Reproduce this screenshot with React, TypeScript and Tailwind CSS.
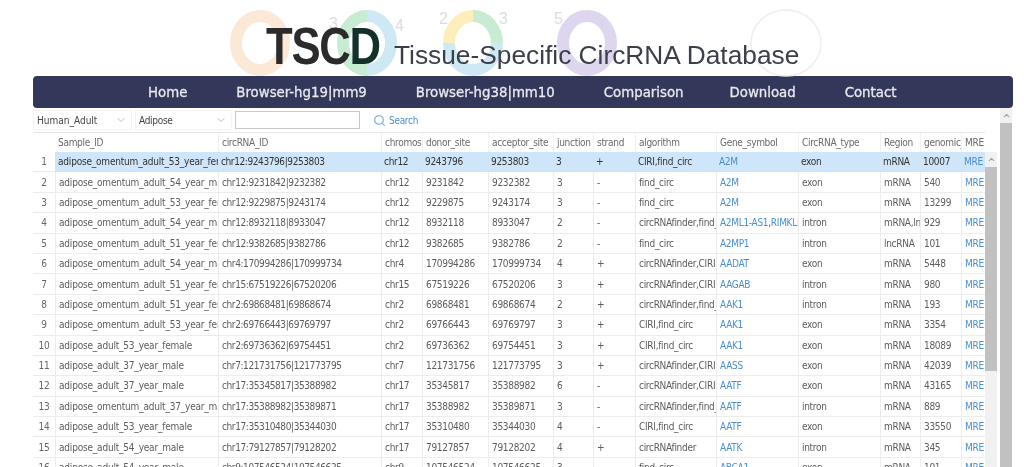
import React from "react";
import { Search, ChevronDown, ChevronUp } from "lucide-react";

const om = "adipose_omentum_adult_";
const rows: string[][] = [
  [om + "53_year_female", "chr12:9243796|9253803", "chr12", "9243796", "9253803", "3", "+", "CIRI,find_circ", "A2M", "exon", "mRNA", "10007"],
  [om + "54_year_male", "chr12:9231842|9232382", "chr12", "9231842", "9232382", "3", "-", "find_circ", "A2M", "exon", "mRNA", "540"],
  [om + "53_year_female", "chr12:9229875|9243174", "chr12", "9229875", "9243174", "3", "-", "find_circ", "A2M", "exon", "mRNA", "13299"],
  [om + "54_year_male", "chr12:8932118|8933047", "chr12", "8932118", "8933047", "2", "-", "circRNAfinder,find_circ", "A2ML1-AS1,RIMKLB", "intron", "mRNA,lncRNA", "929"],
  [om + "51_year_female", "chr12:9382685|9382786", "chr12", "9382685", "9382786", "2", "-", "find_circ", "A2MP1", "intron", "lncRNA", "101"],
  [om + "54_year_male", "chr4:170994286|170999734", "chr4", "170994286", "170999734", "4", "+", "circRNAfinder,CIRI", "AADAT", "exon", "mRNA", "5448"],
  [om + "51_year_female", "chr15:67519226|67520206", "chr15", "67519226", "67520206", "3", "+", "circRNAfinder,CIRI", "AAGAB", "intron", "mRNA", "980"],
  [om + "51_year_female", "chr2:69868481|69868674", "chr2", "69868481", "69868674", "2", "+", "circRNAfinder,find_circ", "AAK1", "intron", "mRNA", "193"],
  [om + "53_year_female", "chr2:69766443|69769797", "chr2", "69766443", "69769797", "3", "+", "CIRI,find_circ", "AAK1", "exon", "mRNA", "3354"],
  ["adipose_adult_53_year_female", "chr2:69736362|69754451", "chr2", "69736362", "69754451", "3", "+", "CIRI,find_circ", "AAK1", "exon", "mRNA", "18089"],
  ["adipose_adult_37_year_male", "chr7:121731756|121773795", "chr7", "121731756", "121773795", "3", "+", "circRNAfinder,CIRI", "AASS", "exon", "mRNA", "42039"],
  ["adipose_adult_37_year_male", "chr17:35345817|35388982", "chr17", "35345817", "35388982", "6", "-", "circRNAfinder,CIRI", "AATF", "exon", "mRNA", "43165"],
  [om + "37_year_male", "chr17:35388982|35389871", "chr17", "35388982", "35389871", "3", "-", "circRNAfinder,find_circ", "AATF", "intron", "mRNA", "889"],
  ["adipose_adult_53_year_female", "chr17:35310480|35344030", "chr17", "35310480", "35344030", "4", "-", "CIRI,find_circ", "AATF", "exon", "mRNA", "33550"],
  ["adipose_adult_54_year_male", "chr17:79127857|79128202", "chr17", "79127857", "79128202", "4", "+", "circRNAfinder", "AATK", "intron", "mRNA", "345"],
  ["adipose_adult_54_year_male", "chr9:107546524|107546625", "chr9", "107546524", "107546625", "3", "-", "find_circ", "ABCA1", "exon", "mRNA", "101"],
];

const headers = ["Sample_ID", "circRNA_ID", "chromosome", "donor_site", "acceptor_site", "junction", "strand", "algorithm", "Gene_symbol", "CircRNA_type", "Region", "genomic_length"];
const grid = "grid grid-cols-[22px_163px_163px_41px_66px_65px_40px_42px_81px_82px_82px_40px_41px_24px]";
const nav = ["Home", "Browser-hg19|mm9", "Browser-hg38|mm10", "Comparison", "Download", "Contact"];

function Rings() {
  return (
    <svg className="absolute left-0 top-0" width="1024" height="80" viewBox="0 0 1024 80" fill="none">
      <ellipse cx="260" cy="43" rx="24" ry="27" stroke="#fbe8d6" strokeWidth="12" />
      <path d="M367 16a24 27 0 0 0 0 54" stroke="#c8ebd3" strokeWidth="12" />
      <path d="M367 16a24 27 0 0 1 0 54" stroke="#cfe9f4" strokeWidth="12" />
      <path d="M473 16a24 27 0 0 0-24 27" stroke="#fdeebc" strokeWidth="12" />
      <path d="M473 16a24 27 0 0 1 24 27" stroke="#c8ebd3" strokeWidth="12" />
      <path d="M497 43a24 27 0 0 1-48 0" stroke="#cfe9f4" strokeWidth="12" />
      <ellipse cx="587" cy="43" rx="24" ry="27" stroke="#ded6ee" strokeWidth="12" />
      <ellipse cx="786" cy="43" rx="35" ry="33" stroke="#eeeef2" strokeWidth="1.5" />
    </svg>
  );
}

function Digit({ className, children }: { className: string; children: React.ReactNode }) {
  return <span className={`absolute text-[16px] leading-none text-[#dcdcdc] ${className}`}>{children}</span>;
}

function Scrollbar({ className, thumb }: { className: string; thumb: string }) {
  return (
    <div className={`flex flex-col items-center bg-[#f1f1f1] ${className}`}>
      <ChevronUp size={9} strokeWidth={3} className="my-[3px] shrink-0 text-[#a3a3a3]" />
      <div className={`w-full bg-[#c1c1c1] ${thumb}`} />
    </div>
  );
}

export default function App() {
  return (
    <div className="h-[467px] w-[1024px] overflow-hidden bg-white font-['DejaVu_Sans_Condensed','DejaVu_Sans',sans-serif] text-[10px] tracking-[-0.3px] text-[#5c5c5c] blur-[0.3px]">
      <header className="relative h-[76px] font-['Liberation_Sans',sans-serif] tracking-normal">
        <Rings />
        <Digit className="left-[329px] top-[16px]">3</Digit>
        <Digit className="left-[395px] top-[18px]">4</Digit>
        <Digit className="left-[439px] top-[11px]">2</Digit>
        <Digit className="left-[499px] top-[11px]">3</Digit>
        <Digit className="left-[554px] top-[11px]">5</Digit>
        <div className="relative flex items-baseline pl-[266px] pt-[20px] leading-none">
          <span className="inline-block w-[128px] origin-left scale-x-[0.84] whitespace-nowrap text-[52px] font-bold tracking-[-1.5px] text-[#2b2b2b]">
            TSC<span className="text-[#14302a]">D</span>
          </span>
          <span className="whitespace-nowrap text-[26.3px] text-[#3a3f4a]">Tissue-Specific CircRNA Database</span>
        </div>
      </header>

      <nav className="mx-[33px] flex h-[32px] w-[980px] items-center rounded-[4px] bg-[#33375a] text-[14.8px] tracking-normal text-[#e8e8ee] [-webkit-text-stroke:0.3px]">
        <span className="ml-[115px]">{nav[0]}</span>
        <span className="ml-[49px]">{nav[1]}</span>
        <span className="ml-[49px]">{nav[2]}</span>
        <span className="ml-[49px]">{nav[3]}</span>
        <span className="ml-[46px]">{nav[4]}</span>
        <span className="ml-[49px]">{nav[5]}</span>
      </nav>

      <div className="ml-[33px] flex w-[980px]">
        <div className="w-[964px]">
          <div className="flex h-[24px] items-center text-[#444]">
            <div className="flex h-[20px] w-[99px] items-center justify-between border border-[#f3f3f3] pl-[3px] pr-[4px]">
              <span className="tracking-normal">Human_Adult</span>
              <ChevronDown size={12} className="text-[#a5c0da]" />
            </div>
            <div className="ml-[3px] flex h-[20px] w-[97px] items-center justify-between border border-[#f3f3f3] pl-[3px] pr-[4px]">
              <span>Adipose</span>
              <ChevronDown size={12} className="text-[#a5c0da]" />
            </div>
            <div className="ml-[3px] h-[18px] w-[125px] border border-[#c8c8c8] bg-white" />
            <Search size={13} strokeWidth={2.5} className="ml-[13px] text-[#8fb2d2]" />
            <span className="ml-[3px] text-[#4a90d0]">Search</span>
          </div>

          <div className="flex">
            <div className="w-[952px] shrink-0">
              <div className={`${grid} h-[20px] border-t border-[#e8e8e8] bg-white text-[#6a6a6a]`}>
                <div />
                {headers.map((h, i) => (
                  <div key={h} className={`flex items-center overflow-hidden whitespace-nowrap pl-[3px] ${i === 0 ? "" : "border-l border-[#f0f0f0]"}`}>
                    {h}
                  </div>
                ))}
                <div className="flex items-center border-l border-[#f0f0f0] pl-[3px]">MRE</div>
              </div>

              {rows.map((r, i) => (
                <div key={i} className={`${grid} h-[20.4px]`}>
                  <div className="flex items-center justify-center border-b border-[#ececec] text-[#666]">{i + 1}</div>
                  {r.map((c, j) => (
                    <div
                      key={j}
                      className={`flex items-center overflow-hidden whitespace-nowrap border-b pl-[3px] ${
                        i === 0 ? "border-[#cfe2f5] bg-[#cfe5f9]" : "border-[#ececec] border-l"
                      } ${j === 8 ? "text-[#4a8fd0]" : i === 0 ? "text-[#333]" : ""} ${
                        j === 0 ? "tracking-[-0.2px]" : j === 1 ? "tracking-[-0.4px]" : ""
                      }`}
                    >
                      {j === 8 && c.includes(",") ? (
                        <>
                          <span>{c.split(",")[0]}</span>
                          <span className="text-[#555]">,</span>
                          <span>{c.split(",")[1]}</span>
                        </>
                      ) : (
                        c
                      )}
                    </div>
                  ))}
                  <div className={`flex items-center border-b pl-[3px] text-[#4a8fd0] ${i === 0 ? "border-[#cfe2f5] bg-[#cfe5f9]" : "border-l border-[#ececec]"}`}>MRE</div>
                </div>
              ))}
            </div>
            <Scrollbar className="mt-[20px] h-[316px] w-[12px] shrink-0" thumb="h-[204px]" />
          </div>
        </div>
        <Scrollbar className="h-[359px] w-[12px] shrink-0 ml-[3px]" thumb="flex-1" />
      </div>
    </div>
  );
}
